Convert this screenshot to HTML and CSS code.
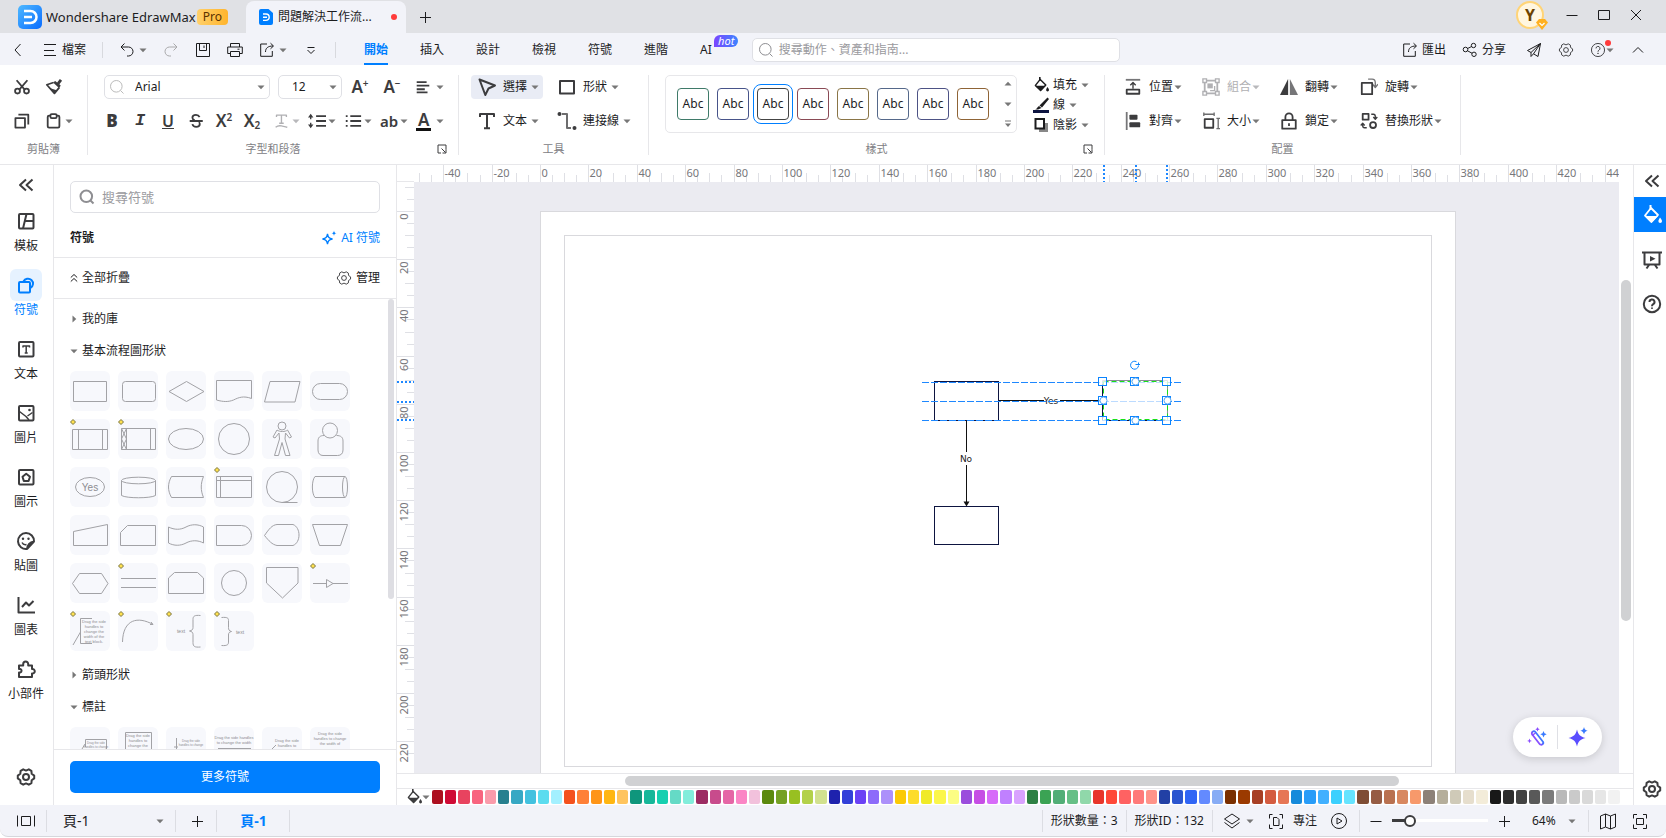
FILE: index.html
```html
<!DOCTYPE html>
<html lang="zh-Hant">
<head>
<meta charset="utf-8">
<title>Wondershare EdrawMax</title>
<link rel="stylesheet" href="styles.css">
</head>
<body>
<svg class="sprite" aria-hidden="true">
  <defs>
    <linearGradient id="g-logo" x1="0" y1="0" x2="1" y2="1"><stop offset="0" stop-color="#4fb9ff"/><stop offset="1" stop-color="#0a6cff"/></linearGradient>
    <linearGradient id="g-ai" x1="0" y1="0" x2="1" y2="0"><stop offset="0" stop-color="#8a4dff"/><stop offset="1" stop-color="#3a7bff"/></linearGradient>
  </defs>
  <symbol id="caret" viewBox="0 0 8 8"><path d="M.5 2.500h7L4 6.300z" fill="currentColor"/></symbol>
  <symbol id="i-back" viewBox="0 0 16 16"><path d="M10.5 2 5 8l5.500 6" class="s1"/></symbol>
  <symbol id="i-menu" viewBox="0 0 16 16"><path d="M2 2.500h12M2 8.500h10M2 13.500h12" class="s1"/></symbol>
  <symbol id="i-undo" viewBox="0 0 16 16"><path d="M5.500 1.500 2 5l3.500 3.500M2 5h7.500a4.500 4.500 0 0 1 0 9H8" class="s1"/></symbol>
  <symbol id="i-redo" viewBox="0 0 16 16"><path d="M10.500 1.500 14 5l-3.500 3.500M14 5H6.500a4.500 4.500 0 0 0 0 9H8" class="s1"/></symbol>
  <symbol id="i-save" viewBox="0 0 16 16"><path d="M1.500 1.500h13v13h-13zM4.500 1.500v7h7v-7M9 3.500v2.500" class="s1"/></symbol>
  <symbol id="i-print" viewBox="0 0 16 16"><path d="M3.500 5V1.500h9V5M3.500 11.500H.7V5h14.600v6.500h-2.800M3.500 9.500h9v5h-9zM10.500 7.200h2" class="s1"/></symbol>
  <symbol id="i-export" viewBox="0 0 16 16"><path d="M8 2H1.700v12.300h11.600V9M6.500 10c0-4 2.500-6 7.500-6M11.500 1.200 14.500 4l-3 2.800" class="s1"/></symbol>
  <symbol id="i-more" viewBox="0 0 16 16"><path d="M4.500 5.500h7" class="s1"/><path d="m4.500 8 3.500 3.500L11.500 8" class="s1"/></symbol>
  <symbol id="i-search" viewBox="0 0 16 16"><circle cx="7.300" cy="7.300" r="5.800" fill="none" stroke="currentColor"/><path d="m11.500 11.500 3 3" fill="none" stroke="currentColor"/></symbol>
  <symbol id="i-share" viewBox="0 0 16 16"><circle cx="3.500" cy="7.500" r="2.300" class="s1"/><circle cx="11.500" cy="3.500" r="2.200" class="s1"/><circle cx="12" cy="12.300" r="2.200" class="s1"/><path d="m5.600 6.500 4-2M5.400 8.700l4.700 2.600" class="s1"/></symbol>
  <symbol id="i-plane" viewBox="0 0 16 16"><path d="M14.500 1.500 1.500 8.500l3.500 2v4l2.500-2.700 4.500 2.700zM5 10.500l9.500-9-7 10.300" class="s1"/></symbol>
  <symbol id="i-gear" viewBox="0 0 20 20"><path d="M7.200 2.300 10 3.600l2.800-1.300 2.600 1.500.3 3 2.500 1.800v2.800l-2.500 1.800-.3 3-2.600 1.500L10 16.400l-2.800 1.300-2.600-1.500-.3-3-2.500-1.800V8.600l2.500-1.800.3-3z" fill="none" stroke="currentColor" stroke-linejoin="round"/><circle cx="10" cy="10" r="3" fill="none" stroke="currentColor"/></symbol>
  <symbol id="i-help" viewBox="0 0 20 20"><circle cx="10" cy="10" r="8.200" fill="none" stroke="currentColor"/><path d="M7.500 8a2.500 2.500 0 1 1 3.700 2.200c-.9.500-1.200.9-1.200 2" fill="none" stroke="currentColor"/><circle cx="10" cy="14.200" r=".9" fill="currentColor"/></symbol>
  <symbol id="i-up" viewBox="0 0 16 16"><path d="m3 10.500 5-5 5 5" class="s1"/></symbol>

  <symbol id="i-cut" viewBox="0 0 20 20"><path d="m4 2.500 9 10.500M16 2.500 7 13" class="s2"/><circle cx="5" cy="14.500" r="2.700" class="s2"/><circle cx="15" cy="14.500" r="2.700" class="s2"/></symbol>
  <symbol id="i-brush" viewBox="0 0 20 20"><path d="m13.500 5 3-4 2.500 2-3 4 1.500 1.500-2 2.500-6.500-6 2.300-1.700z" fill="currentColor"/><path d="M9.500 5 2 7.500 10.500 17l5.500-6.500" class="s2"/><path d="m5 11 5.500 6 2.500-3.500z" fill="currentColor"/></symbol>
  <symbol id="i-copy" viewBox="0 0 20 20"><path d="M2.700 6.700h10.600v10.600H2.700z" class="s2"/><path d="M6 3h11v11" class="s2"/></symbol>
  <symbol id="i-paste" viewBox="0 0 20 20"><rect x="3" y="4" width="13" height="13.300" rx="1.500" class="s2"/><rect x="6" y="2.300" width="7" height="4.500" rx="1.500" fill="#fff" stroke="currentColor" stroke-width="2"/></symbol>
  <symbol id="i-align" viewBox="0 0 20 20"><path d="M3 4.500h11M3 8.500h14M3 12.500h9M3 16h12" class="s2"/></symbol>
  <symbol id="i-strike" viewBox="0 0 20 20"><path d="M14 5.700C13.300 4.200 12 3.300 10 3.300c-2.500 0-4 1.200-4 3 0 1.500 1 2.200 2.500 2.700M6 13.500c.5 2 2 3 4.200 3 2.600 0 4-1.300 4-3.200 0-1-.4-1.600-1-2.100M3 10h14.500" class="s2"/></symbol>
  <symbol id="i-tfx" viewBox="0 0 20 20"><path d="M5 5.500V3.500h11v2M10.500 3.500v8.500M8 12.500h5M4 17c2.500-2 4.500-2 6.500-1.500S15 16 17 17" class="s15"/></symbol>
  <symbol id="i-lines" viewBox="0 0 20 20"><path d="M9 4.500h11M9 10h11M9 15.500h11" class="s2"/><path d="M3 4v4M3 12v4" class="s15"/><path d="M0 6 3 2l3 4zM0 14l3 4 3-4z" fill="currentColor"/></symbol>
  <symbol id="i-list" viewBox="0 0 20 20"><path d="M7 4.500h12M7 10h12M7 15.500h12" class="s2"/><path d="M2 4.500h2M2 10h2M2 15.500h2" class="s2"/></symbol>
  <symbol id="i-launch" viewBox="0 0 10 10"><path d="M9 5.500V1H1v8h3" class="s1"/><path d="m4.500 4.500 4 4M9 5.500V9H5.500" class="s1"/></symbol>
  <symbol id="i-select" viewBox="0 0 20 20"><path d="M2.500 2.500 18 8.500l-6.500 3L8.300 18z" class="s2"/></symbol>
  <symbol id="i-rect" viewBox="0 0 20 20"><path d="M3 4h14v12.500H3z" class="s2"/></symbol>
  <symbol id="i-text" viewBox="0 0 20 20"><path d="M3 6V3h14v3M10 3v14M7 17.200h6" class="s2"/></symbol>
  <symbol id="i-conn" viewBox="0 0 20 20"><circle cx="2.500" cy="3" r="2" fill="currentColor"/><circle cx="17.500" cy="17" r="2" fill="currentColor"/><path d="M5 3h5v14h4" class="s2" opacity=".75"/></symbol>
  <symbol id="i-bucket" viewBox="0 0 20 20"><path d="M9 3 16 10l-6.500 7L3 10.500z" fill="none" stroke="currentColor" stroke-width="1.800" stroke-linejoin="round"/><path d="M3 11h13l-6.500 6.500zM7.500 0h2v5h-2z" fill="currentColor"/><path d="M18 12.500c1.500 2 2 3 2 3.700a1.800 1.800 0 0 1-3.600 0c0-.8.600-1.800 1.600-3.700z" fill="currentColor"/></symbol>
  <symbol id="i-pen" viewBox="0 0 16 16"><path d="M14.500.5 16 2 9 10.500 6.500 8.500zM6 9l2.500 2L5 12.500H2C4 12 4 10 6 9z" fill="currentColor"/><path d="M0 13h16v3H0z" fill="#0d1440"/></symbol>
  <symbol id="i-shadow" viewBox="0 0 16 16"><path d="M6 6h9v9H6z" fill="#888"/><path d="M2.500 2h8.500v9.500H2.500z" fill="#fff" stroke="currentColor" stroke-width="2"/></symbol>
  <symbol id="i-pos" viewBox="0 0 20 20"><path d="M2 2h16" class="s2" opacity=".7"/><path d="M3 13h14v4.500H3z" class="s2"/><path d="M10 12V6M7 8l3-3 3 3" class="s15"/></symbol>
  <symbol id="i-alignobj" viewBox="0 0 20 20"><path d="M3 0v20" class="s2" opacity=".7"/><rect x="6" y="3" width="9" height="5.500" rx="1" fill="currentColor"/><rect x="6" y="11.500" width="12" height="5.500" rx="1" fill="currentColor"/></symbol>
  <symbol id="i-group" viewBox="0 0 20 20"><path d="M3 3h14v14H3z" class="s2"/><path d="M1 1h4v4H1zM15 1h4v4h-4zM1 15h4v4H1zM15 15h4v4h-4z" fill="#fff" stroke="currentColor" stroke-width="1.500"/><path d="M6 6h6v5.500H6z" fill="currentColor"/><path d="M14 9v5H9" class="s15"/></symbol>
  <symbol id="i-size" viewBox="0 0 20 20"><path d="M3 8h9.500v9.500H3z" class="s2"/><path d="M2 2.500h11.500M2 .500v4M13.500.500v4M18 7v11.500M16 7h4M16 18.500h4" class="s15" opacity=".75"/></symbol>
  <symbol id="i-flip" viewBox="0 0 20 20"><path d="M9 1v18H0z" fill="currentColor"/><path d="M11 1v18h9z" fill="currentColor" opacity=".7"/></symbol>
  <symbol id="i-lock" viewBox="0 0 20 20"><path d="M2.500 9h15v9.500h-15zM6 9V5.500a4 4 0 0 1 8 0V9" class="s2"/><path d="M10 12.500v3" class="s2"/></symbol>
  <symbol id="i-rotate" viewBox="0 0 20 20"><path d="M2 5.500h11.500V18H2z" class="s2"/><path d="M9 1.200h4.500c2.500 0 3.500 1.500 3.500 4V9M14 7l3 3.500L20 7" class="s15" opacity=".7"/></symbol>
  <symbol id="i-replace" viewBox="0 0 20 20"><path d="M3 2h6.500v6.500H3z" class="s2"/><circle cx="14.500" cy="14.500" r="3.300" class="s2"/><path d="M12.500 2.500h2.500c1.500 0 2 1 2 2.500v2M14.800 5.500 17 8l2.200-2.500M7.500 17.500H5c-1.500 0-2-1-2-2.500v-2M.8 15 3 12.500 5.200 15" class="s15"/></symbol>

  <symbol id="i-dbl" viewBox="0 0 20 20"><path d="m10 4.500-6 5.500 6 5.500M16.500 4.500l-6 5.500 6 5.500" class="s2"/></symbol>
  <symbol id="i-tpl" viewBox="0 0 20 20"><rect x="3" y="3" width="14.500" height="14.500" rx="1" class="s2"/><path d="M10.500 3 7 17.500M9.500 10h8" class="s2"/></symbol>
  <symbol id="i-sym" viewBox="0 0 20 20"><rect x="3" y="7" width="11" height="10.500" rx="1" class="s2"/><path d="M7.500 6.500a5 5 0 1 1 7 6.500" class="s2"/></symbol>
  <symbol id="i-txt" viewBox="0 0 20 20"><rect x="3" y="3" width="14.500" height="14.500" rx="1" class="s2"/><path d="M7 8.500V7h6.500v1.500M10.200 7v7M8.700 14h3" class="s15"/></symbol>
  <symbol id="i-pic" viewBox="0 0 20 20"><rect x="3" y="3" width="14.500" height="14.500" rx="1" class="s2"/><path d="m3.500 8.500 6.500 5 3 3.500M11.500 13l5-3.500" class="s15"/><circle cx="13.500" cy="7" r="1.300" fill="currentColor"/></symbol>
  <symbol id="i-icon" viewBox="0 0 20 20"><rect x="3" y="3" width="14.500" height="14.500" rx="1" class="s2"/><path d="m10.200 6.800 3.800 2.900-1.400 4.200H7.800L6.500 9.700z" class="s2"/></symbol>
  <symbol id="i-stick" viewBox="0 0 20 20"><path d="M18 10.500A8 8 0 1 0 11 18c.5-4 2.500-6.500 7-7.500zM18 10.500 11 18" class="s2"/><circle cx="7" cy="7.800" r="1.200" fill="currentColor"/><circle cx="12.500" cy="7.800" r="1.200" fill="currentColor"/><path d="M6 11.500c1 2 2.500 2.500 4.500 2" class="s15"/></symbol>
  <symbol id="i-chart" viewBox="0 0 20 20"><path d="M2.500 2v15.500H19M6 12l4-4.500 3 3 4.500-4.500" class="s2"/></symbol>
  <symbol id="i-puz" viewBox="0 0 20 20"><path d="M3 6.500h4.200V5a2.500 2.500 0 0 1 5 0v1.500H16V10a2.300 2.300 0 1 1 0 4.500V18H3v-4.500h1.200a1.800 1.800 0 0 0 0-3.500H3z" class="s2"/></symbol>
  <symbol id="i-spark" viewBox="0 0 16 16"><path d="M6.500 4c.7 3.500 1.500 4.300 5 5-3.500.7-4.300 1.500-5 5-.7-3.500-1.500-4.300-5-5 3.500-.7 4.300-1.500 5-5z" fill="none" stroke="currentColor" stroke-width="1.300"/><path d="M13 .5c.3 2 .8 2.300 2.500 2.700C13.800 3.500 13.300 4 13 6c-.3-2-.8-2.500-2.500-2.800C12.200 2.800 12.700 2.500 13 .5z" fill="currentColor"/></symbol>
  <symbol id="i-fold" viewBox="0 0 8 10"><path d="M.8 4.500 4 1.500l3.200 3M.8 8.500 4 5.500l3.200 3" class="s1"/></symbol>
  <symbol id="i-present" viewBox="0 0 20 20"><path d="M0 2.500h20M2.500 3v11.500h15V3M7 15l-2.500 3.500M13 15l2.500 3.500" class="s2"/><path d="m8 6 5.500 2.700L8 11.500z" fill="currentColor"/></symbol>

  <symbol id="i-pages" viewBox="0 0 20 20"><path d="M1.500 4.500v11M18.500 4.500v11M5.500 5.500h9v9h-9z" class="s1"/></symbol>
  <symbol id="i-plus" viewBox="0 0 16 16"><path d="M8.500 3v11M3 8.500h11" class="s1"/></symbol>
  <symbol id="i-minus" viewBox="0 0 16 16"><path d="M2.500 8.500h11" class="s1"/></symbol>
  <symbol id="i-layers" viewBox="0 0 20 20"><path d="m10 3 7.500 5-7.500 5-7.500-5zM2.500 11.500 10 17l7.500-5.500" class="s1"/></symbol>
  <symbol id="i-focus" viewBox="0 0 20 20"><path d="M6.500 3.500h-3v4M13.500 3.500h3v4M6.500 17.500h-3v-4M13.500 17.500h3v-4M7.500 6.500H11l2 2v6H7.500z" class="s1"/></symbol>
  <symbol id="i-play" viewBox="0 0 20 20"><circle cx="10" cy="10" r="7.500" class="s1"/><path d="m8 7 5 3-5 3z" class="s1"/></symbol>
  <symbol id="i-map" viewBox="0 0 20 20"><path d="m2.500 5 5-2 5 2 5-2v13l-5 2-5-2-5 2zM7.500 3v13M12.500 5v13" class="s1"/></symbol>
  <symbol id="i-fit" viewBox="0 0 20 20"><path d="M7 3.500H3.500v4M13 3.500h3.500v4M7 17.500H3.500v-4M13 17.500h3.500v-4M6.500 7.500h7v6h-7z" class="s1"/></symbol>
</svg>

<header class="titlebar">
  <div class="brand">
    <svg class="brand-logo" viewBox="0 0 24 24"><rect width="24" height="24" rx="5" fill="url(#g-logo)"/><path d="M6 6h6.500a6 6 0 0 1 0 12H6" fill="none" stroke="#fff" stroke-width="2.500"/><path d="M6 12h8" stroke="#fff" stroke-width="2.500"/></svg>
    <span class="brand-name">Wondershare EdrawMax</span>
    <span class="pro">Pro</span>
  </div>
  <div class="doc-tab">
    <svg class="doc-icon" viewBox="0 0 14 16"><path d="M2 0h7.500L14 4v10a2 2 0 0 1-2 2H2a2 2 0 0 1-2-2V2a2 2 0 0 1 2-2z" fill="#007fff"/><path d="M4 5h3a3.200 3.200 0 0 1 0 6.400H4M4 8.200h4" fill="none" stroke="#fff" stroke-width="1.400"/></svg>
    <span>問題解決工作流...</span>
    <i class="dot"></i>
  </div>
  <button class="plain new-tab" aria-label="新增"><svg class="i16"><use href="#i-plus"/></svg></button>
  <div class="window-controls">
    <button class="avatar" aria-label="帳戶">Y<svg class="gem" viewBox="0 0 12 12"><path d="M3 1h6l3 3.500L6 12 0 4.500z" fill="#ffb020"/><path d="m3.500 5 2.500 2.500L8.500 5" fill="none" stroke="#fff" stroke-width="1.200"/></svg></button>
    <button class="plain" aria-label="最小化"><svg class="i16"><use href="#i-minus"/></svg></button>
    <button class="plain" aria-label="最大化"><svg class="i16" viewBox="0 0 16 16"><path d="M2.500 3.500h11v9h-11z" class="s1"/></svg></button>
    <button class="plain" aria-label="關閉"><svg class="i16" viewBox="0 0 16 16"><path d="m3 3 10 10M13 3 3 13" class="s1"/></svg></button>
  </div>
</header>

<div class="menubar">
  <button class="plain" aria-label="返回"><svg class="i16"><use href="#i-back"/></svg></button>
  <button class="plain"><svg class="i16"><use href="#i-menu"/></svg>檔案</button>
  <i class="vsep"></i>
  <button class="plain" aria-label="復原"><svg class="i16"><use href="#i-undo"/></svg><svg class="caret"><use href="#caret"/></svg></button>
  <button class="plain dim" aria-label="重做"><svg class="i16"><use href="#i-redo"/></svg></button>
  <button class="plain" aria-label="儲存"><svg class="i16"><use href="#i-save"/></svg></button>
  <button class="plain" aria-label="列印"><svg class="i16"><use href="#i-print"/></svg></button>
  <button class="plain" aria-label="匯出檔案"><svg class="i16"><use href="#i-export"/></svg><svg class="caret"><use href="#caret"/></svg></button>
  <button class="plain" aria-label="更多"><svg class="i16"><use href="#i-more"/></svg></button>
  <i class="vsep"></i>
  <nav class="tabs">
    <a href="#" class="active">開始</a><a href="#">插入</a><a href="#">設計</a><a href="#">檢視</a><a href="#">符號</a><a href="#">進階</a><a href="#">AI<span class="hot">hot</span></a>
  </nav>
  <label class="search top-search"><svg class="i16"><use href="#i-search"/></svg><input type="text" placeholder="搜尋動作、資產和指南..." aria-label="搜尋動作"></label>
  <div class="menu-right">
    <button class="plain"><svg class="i16"><use href="#i-export"/></svg>匯出</button>
    <button class="plain share"><svg class="i16"><use href="#i-share"/></svg>分享</button>
    <button class="plain" aria-label="傳送"><svg class="i16"><use href="#i-plane"/></svg></button>
    <button class="plain" aria-label="設定"><svg class="i16"><use href="#i-gear"/></svg></button>
    <button class="plain help" aria-label="說明"><svg class="i16"><use href="#i-help"/></svg><svg class="caret"><use href="#caret"/></svg><i class="dot"></i></button>
    <button class="plain" aria-label="收合"><svg class="i16"><use href="#i-up"/></svg></button>
  </div>
</div>

<div class="ribbon">
  <section class="group g-clip">
    <div class="rows">
      <div class="row r12">
        <button class="plain" aria-label="剪下"><svg class="i18"><use href="#i-cut"/></svg></button>
        <button class="plain" aria-label="複製格式"><svg class="i18"><use href="#i-brush"/></svg></button>
      </div>
      <div class="row r12">
        <button class="plain" aria-label="複製"><svg class="i18"><use href="#i-copy"/></svg></button>
        <button class="plain" aria-label="貼上"><svg class="i18"><use href="#i-paste"/></svg><svg class="caret"><use href="#caret"/></svg></button>
      </div>
    </div>
    <footer class="solo"><span>剪貼簿</span></footer>
  </section>

  <section class="group g-font">
    <div class="rows">
      <div class="row">
        <label class="combo combo-font"><svg class="i16 faint"><use href="#i-search"/></svg><select aria-label="字型"><option>Arial</option></select><svg class="caret"><use href="#caret"/></svg></label>
        <label class="combo combo-size"><select aria-label="字型大小"><option>12</option></select><svg class="caret"><use href="#caret"/></svg></label>
        <div class="row r12">
          <button class="plain glyph" aria-label="放大字型">A<sup>+</sup></button>
          <button class="plain glyph" aria-label="縮小字型">A<sup>−</sup></button>
          <button class="plain sq" aria-label="對齊文字"><svg class="i18"><use href="#i-align"/></svg><svg class="caret"><use href="#caret"/></svg></button>
        </div>
      </div>
      <div class="row">
        <div class="row r12 narrow">
          <button class="plain glyph" aria-label="粗體"><b>B</b></button>
          <button class="plain glyph ital" aria-label="斜體">I</button>
          <button class="plain glyph under" aria-label="底線">U</button>
          <button class="plain" aria-label="刪除線"><svg class="i18"><use href="#i-strike"/></svg></button>
          <button class="plain glyph" aria-label="上標">X<sup>2</sup></button>
          <button class="plain glyph" aria-label="下標">X<sub>2</sub></button>
          <button class="plain withc dim" aria-label="文字效果"><svg class="i18"><use href="#i-tfx"/></svg><svg class="caret"><use href="#caret"/></svg></button>
        </div>
        <div class="row narrow">
          <button class="plain withc" aria-label="行距"><svg class="i18"><use href="#i-lines"/></svg><svg class="caret"><use href="#caret"/></svg></button>
          <button class="plain withc" aria-label="清單"><svg class="i18"><use href="#i-list"/></svg><svg class="caret"><use href="#caret"/></svg></button>
          <button class="plain withc glyph ab" aria-label="大小寫"><span>ab</span><svg class="caret"><use href="#caret"/></svg></button>
          <button class="plain withc glyph fontcolor" aria-label="字型色彩"><span>A</span><svg class="caret"><use href="#caret"/></svg></button>
        </div>
      </div>
    </div>
    <footer><span>字型和段落</span><button class="plain" aria-label="字型選項"><svg class="i10"><use href="#i-launch"/></svg></button></footer>
  </section>

  <section class="group g-tools">
    <div class="rows">
      <div class="row">
        <button class="tool on"><svg class="i20"><use href="#i-select"/></svg>選擇<svg class="caret"><use href="#caret"/></svg></button>
        <button class="tool"><svg class="i20"><use href="#i-rect"/></svg>形狀<svg class="caret"><use href="#caret"/></svg></button>
      </div>
      <div class="row">
        <button class="tool"><svg class="i20"><use href="#i-text"/></svg>文本<svg class="caret"><use href="#caret"/></svg></button>
        <button class="tool"><svg class="i20"><use href="#i-conn"/></svg>連接線<svg class="caret"><use href="#caret"/></svg></button>
      </div>
    </div>
    <footer class="solo"><span>工具</span></footer>
  </section>

  <section class="group g-style">
    <div class="style-body">
      <div class="gallery">
        <button class="abc a1">Abc</button><button class="abc a2">Abc</button><button class="abc a3 picked">Abc</button><button class="abc a4">Abc</button><button class="abc a5">Abc</button><button class="abc a6">Abc</button><button class="abc a7">Abc</button><button class="abc a8">Abc</button>
        <div class="gallery-nav">
          <button class="plain" aria-label="上一列"><svg class="caret flipv"><use href="#caret"/></svg></button>
          <button class="plain" aria-label="下一列"><svg class="caret"><use href="#caret"/></svg></button>
          <button class="plain" aria-label="展開"><svg class="caret" viewBox="0 0 8 8"><path d="M1 .5h6v1H1zM1 3.500h6L4 7z" fill="currentColor"/></svg></button>
        </div>
      </div>
      <div class="style-list">
        <button class="plain"><svg class="i16"><use href="#i-bucket"/></svg>填充<svg class="caret"><use href="#caret"/></svg></button>
        <button class="plain"><svg class="i16"><use href="#i-pen"/></svg>線<svg class="caret"><use href="#caret"/></svg></button>
        <button class="plain"><svg class="i16"><use href="#i-shadow"/></svg>陰影<svg class="caret"><use href="#caret"/></svg></button>
      </div>
    </div>
    <footer><span>樣式</span><button class="plain" aria-label="樣式選項"><svg class="i10"><use href="#i-launch"/></svg></button></footer>
  </section>

  <section class="group g-arr">
    <div class="arr-grid">
      <button class="tool"><svg class="i18"><use href="#i-pos"/></svg>位置<svg class="caret"><use href="#caret"/></svg></button>
      <button class="tool dim"><svg class="i18"><use href="#i-group"/></svg>組合<svg class="caret"><use href="#caret"/></svg></button>
      <button class="tool"><svg class="i18"><use href="#i-flip"/></svg>翻轉<svg class="caret"><use href="#caret"/></svg></button>
      <button class="tool"><svg class="i18"><use href="#i-rotate"/></svg>旋轉<svg class="caret"><use href="#caret"/></svg></button>
      <button class="tool"><svg class="i18"><use href="#i-alignobj"/></svg>對齊<svg class="caret"><use href="#caret"/></svg></button>
      <button class="tool"><svg class="i18"><use href="#i-size"/></svg>大小<svg class="caret"><use href="#caret"/></svg></button>
      <button class="tool"><svg class="i18"><use href="#i-lock"/></svg>鎖定<svg class="caret"><use href="#caret"/></svg></button>
      <button class="tool"><svg class="i18"><use href="#i-replace"/></svg>替換形狀<svg class="caret"><use href="#caret"/></svg></button>
    </div>
    <footer class="solo"><span>配置</span></footer>
  </section>
</div>

<main class="work">
  <nav class="rail">
    <button class="plain collapse" aria-label="收合面板"><svg class="i20"><use href="#i-dbl"/></svg></button>
    <button class="rail-item"><span><svg class="i20"><use href="#i-tpl"/></svg></span>模板</button>
    <button class="rail-item on"><span><svg class="i20"><use href="#i-sym"/></svg></span>符號</button>
    <button class="rail-item"><span><svg class="i20"><use href="#i-txt"/></svg></span>文本</button>
    <button class="rail-item"><span><svg class="i20"><use href="#i-pic"/></svg></span>圖片</button>
    <button class="rail-item"><span><svg class="i20"><use href="#i-icon"/></svg></span>圖示</button>
    <button class="rail-item"><span><svg class="i20"><use href="#i-stick"/></svg></span>貼圖</button>
    <button class="rail-item"><span><svg class="i20"><use href="#i-chart"/></svg></span>圖表</button>
    <button class="rail-item"><span><svg class="i20"><use href="#i-puz"/></svg></span>小部件</button>
    <button class="plain rail-gear" aria-label="設定"><svg class="i20 bold"><use href="#i-gear"/></svg></button>
  </nav>

  <aside class="panel">
    <div class="panel-head">
      <label class="search side-search"><svg class="i16 bold"><use href="#i-search"/></svg><input type="text" placeholder="搜尋符號" aria-label="搜尋符號"></label>
      <div class="between"><b>符號</b><button class="plain blue"><svg class="i16"><use href="#i-spark"/></svg>AI 符號</button></div>
    </div>
    <div class="panel-tools">
      <button class="plain"><svg class="fold"><use href="#i-fold"/></svg>全部折疊</button>
      <button class="plain"><svg class="i16"><use href="#i-gear"/></svg>管理</button>
    </div>
    <div class="lib">
      <button class="lib-title"><svg class="caret right"><use href="#caret"/></svg>我的庫</button>
      <button class="lib-title"><svg class="caret"><use href="#caret"/></svg>基本流程圖形狀</button>
      <div class="tiles" id="basic"></div>
      <button class="lib-title"><svg class="caret right"><use href="#caret"/></svg>箭頭形狀</button>
      <button class="lib-title"><svg class="caret"><use href="#caret"/></svg>標註</button>
      <div class="tiles" id="callouts"></div>
      <i class="lib-thumb"></i>
    </div>
    <div class="panel-foot"><button class="primary">更多符號</button></div>
  </aside>

  <section class="stage">
    <div class="corner"></div>
    <svg class="ruler-h" id="rulerH"></svg>
    <div class="vscroll"><i></i></div>
    <svg class="ruler-v" id="rulerV"></svg>
    <div class="canvas">
      <svg class="drawing">
        <rect x="126.500" y="29.500" width="915" height="640" fill="#fff" stroke="#d9d9dd"/>
        <rect x="150.500" y="53.500" width="867" height="531" fill="none" stroke="#d9d9dd"/>
        <g fill="none" stroke="#0d1440"><rect x="520.500" y="199.500" width="64" height="39"/><rect x="520.500" y="324.500" width="64" height="38"/></g>
        <path d="M585 218.500h45M646 218.500h42M552.500 239v31M552.500 283v39" stroke="#111" fill="none"/>
        <path d="M549.500 319.500h6l-3 5z" fill="#111"/>
        <text x="637" y="222" class="lbl">Yes</text>
        <text x="552" y="280" class="lbl">No</text>
        <path d="M688.500 239v-40.500h65V239" fill="#fff" stroke="#8c8c9a"/>
        <path d="M688.500 202v36.500h65" fill="none" stroke="#0d1440"/>
        <path d="M508 200.500h259M508 219.500h259M508 238.500h259" stroke="#1e88ff" stroke-dasharray="7 2" fill="none"/>
        <rect x="690" y="200" width="63" height="38" fill="#fff" opacity=".7"/>
        <rect x="689.500" y="199.500" width="64" height="38" fill="none" stroke="#18e018" stroke-dasharray="5 3"/>
        <g fill="#fff" fill-opacity=".75" stroke="#0a84ff" shape-rendering="crispEdges">
          <path d="M684.500 195.500h8v8h-8zM716.500 195.500h8v8h-8zM748.500 195.500h8v8h-8zM684.500 214.500h8v8h-8zM748.500 214.500h8v8h-8zM684.500 234.500h8v8h-8zM716.500 234.500h8v8h-8zM748.500 234.500h8v8h-8z"/>
        </g>
        <g fill="#fff" stroke="#5aa9f5"><circle cx="721.500" cy="199.500" r="3.500"/><circle cx="721.500" cy="238.500" r="3.500"/><circle cx="689.500" cy="218.500" r="3.500"/><circle cx="753.500" cy="218.500" r="3.500"/></g>
        <path d="M724.500 184a4 4 0 1 1-2-4.300M721.500 182.500h4.500M724.500 180.500v3" fill="none" stroke="#0a84ff"/>
      </svg>
      <div class="ai-float">
        <button class="plain" aria-label="AI 魔術棒"><svg class="i20" viewBox="0 0 20 20"><rect x="8.500" y="3" width="4" height="16" rx="2" transform="rotate(-38 10.500 11)" fill="none" stroke="url(#g-ai)" stroke-width="1.800"/><path d="m5 8.500 3.500-2.500" stroke="#8a4dff" stroke-width="1.500"/><path d="m10.500 0 .7 1.500 1.500.7-1.500.7-.7 1.500-.7-1.500-1.500-.7 1.500-.7zM2.500 11.500l.7 1.700 1.700.7-1.700.7-.7 1.700-.7-1.700-1.700-.7 1.700-.7z" fill="#8a4dff"/><path d="m16.500 4 1 2.200 2.200 1-2.200 1-1 2.200-1-2.200-2.200-1 2.200-1z" fill="#3a7bff"/></svg></button>
        <i></i>
        <button class="plain" aria-label="AI 助手"><svg class="i20" viewBox="0 0 20 20"><path d="M9 2.500c1.500 5.500 3 7 8.500 8.500-5.500 1.500-7 3-8.500 8.500C7.500 14 6 12.500.5 11 6 9.500 7.500 8 9 2.500z" fill="#5a4dff"/><path d="M16 0c.6 2.500 1.200 3.100 3.700 3.700-2.500.6-3.100 1.200-3.700 3.700-.6-2.500-1.200-3.100-3.700-3.700C14.800 3.100 15.400 2.500 16 0z" fill="#3a7bff"/></svg></button>
      </div>
    </div>
    <div class="hscroll"><i></i></div>
    <div class="palette">
      <button class="plain" aria-label="填充色彩"><svg class="i16"><use href="#i-bucket"/></svg><svg class="caret"><use href="#caret"/></svg></button>
      <div class="colors" id="colors"></div>
    </div>
  </section>

  <nav class="rail-right">
    <button class="plain" aria-label="展開面板"><svg class="i20"><use href="#i-dbl"/></svg></button>
    <button class="plain on" aria-label="樣式"><svg class="i20"><use href="#i-bucket"/></svg></button>
    <button class="plain" aria-label="簡報"><svg class="i20"><use href="#i-present"/></svg></button>
    <button class="plain" aria-label="說明"><svg class="i20 bold"><use href="#i-help"/></svg></button>
    <button class="plain end" aria-label="設定"><svg class="i20 bold"><use href="#i-gear"/></svg></button>
  </nav>
</main>

<footer class="status">
  <button class="plain pages" aria-label="頁面檢視"><svg class="i20"><use href="#i-pages"/></svg></button>
  <label class="page-select"><select aria-label="頁面"><option>頁-1</option></select><svg class="caret"><use href="#caret"/></svg></label>
  <button class="plain add" aria-label="新增頁面"><svg class="i16"><use href="#i-plus"/></svg></button>
  <button class="plain page-tab">頁-1</button>
  <div class="status-right">
    <span class="cell count">形狀數量：3</span>
    <span class="cell count">形狀ID：132</span>
    <div class="cell modes">
      <button class="plain" aria-label="圖層"><svg class="i20"><use href="#i-layers"/></svg><svg class="caret"><use href="#caret"/></svg></button>
      <button class="plain focus"><svg class="i20"><use href="#i-focus"/></svg>專注</button>
      <button class="plain" aria-label="播放"><svg class="i20"><use href="#i-play"/></svg></button>
    </div>
    <div class="cell zoom">
      <button class="plain" aria-label="縮小"><svg class="i16"><use href="#i-minus"/></svg></button>
      <input type="range" min="0" max="100" value="14" aria-label="縮放">
      <button class="plain" aria-label="放大"><svg class="i16"><use href="#i-plus"/></svg></button>
      <label class="zoom-select"><select aria-label="縮放比例"><option>64%</option></select><svg class="caret"><use href="#caret"/></svg></label>
    </div>
    <div class="cell views">
      <button class="plain" aria-label="導覽"><svg class="i20"><use href="#i-map"/></svg></button>
      <button class="plain" aria-label="全螢幕"><svg class="i20"><use href="#i-fit"/></svg></button>
    </div>
  </div>
</footer>
<script src="app.js"></script>
</body>
</html>
```
FILE: styles.css
```css
* { box-sizing: border-box; }
html, body { height: 100%; }
body {
  margin: 0;
  display: flex;
  flex-direction: column;
  overflow: hidden;
  background: #fff;
  color: #1c1c1e;
  font: 12px/16px "Noto Sans", "Noto Sans CJK TC", sans-serif;
}
button, input, select { font: inherit; color: inherit; }
button { cursor: pointer; white-space: nowrap; }
svg { display: block; flex: none; }
i { font-style: normal; }
.sprite { position: absolute; width: 0; height: 0; }
.s1, .s15, .s2 { fill: none; stroke: currentColor; stroke-width: 1; stroke-linejoin: round; }
.s15 { stroke-width: 1.500; }
.s2 { stroke-width: 2; }
.i10 { width: 10px; height: 10px; }
.i16 { width: 16px; height: 16px; }
.i18 { width: 18px; height: 18px; }
.i20 { width: 20px; height: 20px; }
.bold { stroke-width: 2; }
.caret { width: 8px; height: 8px; color: #777; }
.faint { color: #bbb; }
.dim { color: #a9a9ab; }
.dim .caret { color: #bbb; }
.blue { color: #007fff; }
.plain {
  display: flex;
  align-items: center;
  gap: 4px;
  padding: 0;
  border: 0;
  background: none;
}
.dot { width: 6px; height: 6px; border-radius: 50%; background: #ff3b3b; }

/* Title bar */
.titlebar {
  display: flex;
  flex: none;
  height: 33px;
  background: #e0e1e5;
}
.brand { display: flex; align-items: center; width: 246px; padding-left: 18px; }
.brand-logo { width: 24px; height: 24px; margin-right: 4px; }
.brand-name { font-size: 13px; }
.pro {
  margin-left: auto;
  margin-right: 18px;
  padding: 0 6px;
  border-radius: 4px;
  background: linear-gradient(90deg, #ffd06a, #ffb42c);
  color: #5a3200;
}
.doc-tab {
  display: flex;
  align-items: center;
  width: 160px;
  margin-top: 1px;
  padding: 0 9px 0 13px;
  border-radius: 8px 8px 0 0;
  background: #f2f3f9;
}
.doc-icon { width: 14px; height: 16px; margin-right: 5px; }
.doc-tab .dot { margin-left: auto; }
.new-tab { margin-left: 11px; }
.window-controls { display: flex; align-items: center; gap: 16px; margin-left: auto; padding: 0 22px 4px 0; }
.avatar {
  position: relative;
  width: 28px;
  height: 28px;
  margin-right: 4px;
  padding: 0;
  border: 2px solid #ffd477;
  border-radius: 50%;
  background: #fff6e0;
  color: #6b4200;
  font-size: 16px;
  font-weight: 700;
}
.gem { position: absolute; right: -6px; bottom: -3px; width: 12px; height: 12px; }

/* Menu bar */
.menubar {
  display: flex;
  flex: none;
  align-items: center;
  gap: 16px;
  height: 32px;
  padding: 2px 20px 0 10px;
  background: #f2f3f9;
}
.vsep { width: 1px; height: 16px; background: #d8d9de; }
.tabs { display: flex; gap: 32px; height: 30px; margin-left: 12px; }
.tabs a { position: relative; color: inherit; line-height: 30px; text-decoration: none; white-space: nowrap; }
.tabs .active { color: #007fff; font-weight: 700; box-shadow: inset 0 -2px #007fff; }
.hot {
  position: absolute;
  left: 14px;
  top: 0;
  padding: 0 4px;
  border-radius: 6px 6px 6px 0;
  background: linear-gradient(90deg, #7b46ff, #3d84ff);
  color: #fff;
  font-size: 11px;
  font-style: italic;
  line-height: 12px;
}
.search, .combo {
  display: flex;
  align-items: center;
  border: 1px solid #dfe0e5;
  border-radius: 5px;
  background: #fff;
}
.search input { flex: 1; min-width: 0; padding: 0; border: 0; outline: 0; background: none; }
.search input::placeholder { color: #9a9a9e; opacity: 1; }
.search svg { color: #8e8e92; }
.top-search { flex: 0 1 368px; gap: 5px; height: 24px; margin-left: 24px; padding: 0 5px; }
.menu-right { display: flex; align-items: center; gap: 16px; margin-left: auto; }
.share { margin-right: 4px; }
.help { position: relative; gap: 0; }
.help .dot { position: absolute; left: 15px; top: -2px; }

/* Ribbon */
.ribbon {
  display: flex;
  flex: none;
  height: 100px;
  padding: 10px 0 9px;
  border-bottom: 1px solid #e7e7ea;
}
.group { display: flex; flex-direction: column; border-right: 1px solid #e7e7ea; }
.group footer {
  display: grid;
  grid-template-columns: 32px 1fr 32px;
  align-items: center;
  margin-top: auto;
  color: #808084;
  font-size: 11px;
  line-height: 12px;
}
.group .solo { display: block; text-align: center; }
.group footer span { grid-column: 2; text-align: center; }
.group footer button { justify-self: center; color: #444; }
.ribbon .plain, .tool svg:first-child { color: #3c3c3e; }
.ribbon .style-list .plain { color: #1c1c1e; }
.ribbon .dim, .ribbon .dim svg:first-child { color: #b0b0b3; }
.ribbon .caret { color: #777; }
.ribbon .dim .caret { color: #b8b8bb; }
.rows { display: flex; flex-direction: column; gap: 10px; }
.row { display: flex; align-items: center; gap: 8px; height: 24px; }
.r12 { gap: 12px; }
.g-clip { width: 88px; }
.g-clip .rows { padding-left: 12px; }
.g-clip .plain { gap: 2px; padding-left: 1px; min-width: 20px; }
.g-clip .r12 { gap: 12px; }
.g-font { width: 371px; }
.g-font .rows { padding-left: 16px; }
.combo { height: 24px; padding: 0 4px; }
.combo select, .page-select select, .zoom-select select {
  flex: 1;
  min-width: 0;
  padding: 0;
  border: 0;
  outline: 0;
  background: none;
  appearance: none;
}
.combo-font { width: 166px; gap: 10px; }
.combo-size { width: 64px; padding-left: 13px; }
.glyph { font-size: 17px; font-weight: 600; line-height: 20px; justify-content: center; gap: 0; min-width: 20px; }
.glyph sup, .glyph sub { align-self: flex-start; font-size: 10px; line-height: 12px; }
.glyph sub { align-self: flex-end; }
.ital { font-family: "Liberation Mono", monospace; font-style: italic; }
.under { text-decoration: underline; font-size: 16px; }
.narrow .plain { justify-content: center; width: 16px; min-width: 16px; }
.narrow .withc { justify-content: space-between; width: 28px; gap: 0; }
.narrow .ab { gap: 2px; font-size: 15px; }
.fontcolor span { border-bottom: 3px solid #111; line-height: 16px; padding: 0 2px; }
.g-tools { width: 190px; }
.g-tools .rows { padding-left: 12px; }
.tool {
  display: flex;
  align-items: center;
  gap: 6px;
  height: 24px;
  padding: 0 4px 0 6px;
  border: 0;
  border-radius: 4px;
  background: none;
}
.tool .caret { margin-left: -2px; }
.on.tool { background: #e9ecf5; }
.g-style { width: 456px; }
.style-body { display: flex; gap: 16px; padding-left: 16px; }
.gallery {
  display: flex;
  align-items: center;
  gap: 8px;
  width: 352px;
  height: 58px;
  padding: 0 4px 0 11px;
  border: 1px solid #e7e7ea;
  border-radius: 5px;
}
.abc { width: 32px; height: 32px; padding: 0; border: 1px solid; border-radius: 4px; background: #fff; }
.a1 { border-color: #3f7a69; }
.a2 { border-color: #47548a; }
.a3 { border-color: #444; }
.a4 { border-color: #8a4a55; }
.a5 { border-color: #8a7546; }
.a6 { border-color: #55688a; }
.a7 { border-color: #4d5285; }
.a8 { border-color: #8f6436; }
.picked { outline: 1px solid #007fff; outline-offset: 3px; }
.gallery-nav { display: flex; flex-direction: column; gap: 12px; margin-left: auto; }
.flipv { transform: rotate(180deg); }
.style-list { display: flex; flex-direction: column; }
.style-list .plain { height: 20px; }
.g-arr { width: 356px; }
.arr-grid { display: grid; grid-template-columns: 78px 78px 80px auto; row-gap: 10px; padding-left: 12px; }
.arr-grid .tool { padding-left: 7px; gap: 7px; }
.arr-grid .caret { margin-left: -6px; }

/* Work area */
.work { display: flex; flex: 1; min-height: 0; }
.rail {
  display: flex;
  flex: none;
  flex-direction: column;
  align-items: center;
  width: 54px;
  padding: 10px 1px 18px 0;
  border-right: 1px solid #e7e7ea;
}
.collapse { margin-bottom: 10px; }
.rail svg, .rail-right svg { color: #3c3c3e; }
.rail-item {
  display: flex;
  flex-direction: column;
  align-items: center;
  height: 64px;
  padding: 0;
  border: 0;
  background: none;
  line-height: 18px;
}
.rail-item span { display: grid; place-items: center; width: 32px; height: 32px; border-radius: 6px; }
.rail .on, .rail .on svg { color: #007fff; }
.rail .on span { background: #e6f2ff; }
.rail-gear { margin-top: auto; }

.panel { display: flex; flex: none; flex-direction: column; width: 343px; border-right: 1px solid #e7e7ea; }
.panel-head { padding: 16px 16px 0; border-bottom: 1px solid #e7e7ea; }
.side-search { gap: 7px; height: 32px; padding: 0 8px; font-size: 13px; }
.between, .panel-tools { display: flex; align-items: center; justify-content: space-between; }
.between { height: 44px; padding-top: 6px; }
.panel-tools { height: 41px; padding: 0 16px; border-bottom: 1px solid #e7e7ea; }
.fold { width: 8px; height: 10px; }
.lib {
  position: relative;
  flex: 1;
  min-height: 0;
  padding: 4px 0 0 16px;
  overflow-y: auto;
  scrollbar-width: none;
}
.lib-title { display: flex; align-items: center; gap: 4px; width: 100%; height: 32px; padding: 0; border: 0; background: none; }
.right { transform: rotate(-90deg); }
.tiles { display: grid; grid-template-columns: repeat(6, 40px); gap: 8px; padding: 4px 0 8px; }
.tile { width: 40px; height: 40px; padding: 0; border: 0; border-radius: 6px; background: #f7f8fc; }
.tile svg { width: 40px; height: 40px; overflow: visible; fill: none; stroke: #a2a2a6; }
.tile text { fill: #8c8c90; stroke: none; font-family: "Liberation Sans", sans-serif; text-anchor: middle; }
.tile .handle { fill: #ffe14d; stroke: #7a7440; }
.lib-thumb { position: absolute; right: 2px; top: 0; width: 6px; height: 300px; border-radius: 3px; background: #dedee3; }
.panel-foot { padding: 11px 16px 12px; border-top: 1px solid #e7e7ea; }
.primary { width: 100%; height: 32px; border: 0; border-radius: 5px; background: #007fff; color: #fff; }

.stage {
  display: grid;
  flex: 1;
  min-width: 0;
  grid-template: 17px 1fr 15px 17px / 17px 1fr 14px;
}
.corner { border-bottom: 1px solid #e7e7ea; }
.ruler-h, .ruler-v { width: 100%; height: 100%; overflow: hidden; }
.ruler-h text, .ruler-v text { fill: #77777b; font-size: 11px; }
.tick { fill: none; stroke: #dfe0e5; }
.mark { fill: none; stroke: #1e88ff; stroke-width: 2; stroke-dasharray: 2 2; }
.canvas { position: relative; min-height: 0; overflow: hidden; background: #ebebf1; }
.drawing { position: absolute; width: 100%; height: 100%; }
.lbl { font-family: "DejaVu Sans", sans-serif; font-size: 9px; text-anchor: middle; fill: #222; }
.vscroll { grid-row: 1 / 3; grid-column: 3; padding: 115px 2px 152px; }
.vscroll i { display: block; height: 100%; border-radius: 5px; background: #d0d1d3; }
.hscroll { grid-column: 1 / -1; padding: 2px 234px 2px 228px; border-top: 1px solid #e7e7ea; }
.hscroll i { display: block; height: 10px; border-radius: 5px; background: #d0d1d3; }
.palette {
  display: flex;
  grid-column: 1 / -1;
  align-items: center;
  padding-left: 9px;
  border-top: 1px solid #e7e7ea;
}
.palette .plain { gap: 0; width: 26px; color: #3c3c3e; }
.colors { display: flex; flex: 1; gap: 2px; }
.colors button { flex: 1; height: 14px; padding: 0; border: 0; border-radius: 2px; }
.ai-float {
  position: absolute;
  right: 17px;
  bottom: 16px;
  display: flex;
  align-items: center;
  justify-content: center;
  gap: 10px;
  width: 89px;
  height: 40px;
  border-radius: 20px;
  background: #fff;
  box-shadow: 0 2px 8px rgb(0 0 0 / 15%);
}
.ai-float i { width: 1px; height: 24px; background: #dfe0e5; }
.rail-right { display: flex; flex: none; flex-direction: column; width: 33px; border-left: 1px solid #e7e7ea; }
.rail-right .plain { justify-content: center; height: 32px; padding-left: 4px; margin-bottom: 12px; }
.rail-right .plain:first-child { margin: 0; }
.rail-right .on { height: 35px; background: #007fff; }
.rail-right .on svg { color: #fff; }
.rail-right .end { margin: auto 0 0; }

/* Status bar */
.status {
  display: flex;
  flex: none;
  height: 32px;
  margin-bottom: 1px;
  border-bottom: 1px solid #d6d7dc;
  border-radius: 0 0 8px 8px;
  background: #f2f3f9;
}
.status > .plain, .page-select, .cell { position: relative; display: flex; align-items: center; }
.pages::after, .page-select::after, .add::after, .page-tab::after, .cell::before {
  content: "";
  position: absolute;
  right: 0;
  top: 5px;
  width: 1px;
  height: 22px;
  background: #dcdde3;
}
.cell::before { right: auto; left: 0; }
.pages { width: 47px; padding-left: 16px; }
.page-select { width: 129px; padding: 0 12px 0 16px; font-size: 14px; }
.add { justify-content: center; width: 41px; }
.page-tab { justify-content: center; width: 73px; color: #007fff; font-size: 14px; font-weight: 700; }
.status-right { display: flex; margin-left: auto; }
.cell { padding: 0 8px 0 9px; white-space: nowrap; }
.count { font-family: "Noto Sans", "Noto Sans CJK SC", sans-serif; }
.modes { gap: 12px; padding: 0 10px; }
.modes .plain { gap: 4px; }
.modes .focus { gap: 7px; }
.zoom { gap: 8px; padding-right: 12px; }
.zoom-select { display: flex; align-items: center; gap: 12px; margin-left: 12px; }
.views { gap: 12px; padding: 0 16px 0 10px; }
input[type="range"] {
  width: 96px;
  height: 12px;
  margin: 0;
  appearance: none;
  background: linear-gradient(90deg, #3c3c3e 16px, #fff 16px) center / 100% 3px no-repeat;
}
input[type="range"]::-webkit-slider-thumb {
  appearance: none;
  width: 12px;
  height: 12px;
  border: 2px solid #3c3c3e;
  border-radius: 50%;
  background: #fff;
}
```
FILE: app.js
```js
// Shape thumbnails, each on a 40 x 40 grid; h marks shapes with an adjust handle.
const tiny = (x, y, lines, size = 4) =>
  lines.map((t, i) => `<text x="${x}" y="${y + i * (size + 1)}" font-size="${size}">${t}</text>`).join('');

const basic = [
  { d: '<path d="M3.500 10.500h33v20h-33z"/>' },
  { d: '<rect x="4.500" y="10.500" width="33" height="20" rx="3"/>' },
  { d: '<path d="m3 20.500 17.500-10 17.500 10-17.500 10z"/>' },
  { d: '<path d="M2.500 9.500h35v18c-8-3-13-1-18 1.500-5 2-10 2-17 0z"/>' },
  { d: '<path d="M8 10.500h30l-5 20.500H2.500z"/>' },
  { d: '<rect x="2.500" y="12.500" width="35" height="16" rx="8"/>' },
  { h: 1, d: '<path d="M2.500 10.500h35v20h-35zM8.500 10.500v20M32.500 10.500v20"/>' },
  { h: 1, d: '<path d="M3.500 9.500h34v21h-34zM8.500 9.500v21M32.500 9.500v21M3.500 9.500l5 10.500-5 10.500M8.500 9.500 3.500 20l5 10.500"/>' },
  { d: '<ellipse cx="20" cy="20" rx="17.500" ry="10.500"/>' },
  { d: '<circle cx="20" cy="20" r="15.500"/>' },
  { d: '<circle cx="20" cy="7" r="4"/><path d="M15 11l-4 7 2 1 4-5 .5 6-5 16.500h4l3.500-13 3.500 13h4.500L23 20l.5-6 4 5 2-1-4-7c-2 2-8 2-10.500 0z"/>' },
  { d: '<circle cx="20" cy="11.500" r="7.500"/><path d="M14 16.500c-4 0-6 2-6 5.500v9c0 3.500 2 5.500 5 5.500h14.500c3.500 0 5.500-2 5.500-5.500v-9c0-3.500-2-5.500-6.500-5.500"/>' },
  { d: '<ellipse cx="20" cy="20" rx="14.500" ry="9.500"/><text x="20" y="24" font-size="10">Yes</text>' },
  { d: '<ellipse cx="20.500" cy="13.500" rx="17" ry="3.300"/><path d="M3.500 13.500v15c5 3 29 3 34 0v-15"/>' },
  { d: '<path d="M5.500 9.500h32c-3 7-3 14 0 21h-32c-4-7-4-14 0-21z"/>' },
  { h: 1, d: '<path d="M2.500 9.500h35v21h-35zM6.500 9.500v21M2.500 13.500h35"/>' },
  { d: '<circle cx="20" cy="20" r="15.500"/><path d="M20 35.500h15.500"/>' },
  { d: '<path d="M35 9.500H5c-3.500 4-3.500 17 0 21h30"/><ellipse cx="35" cy="20" rx="2.500" ry="10.500"/>' },
  { d: '<path d="m3.500 16.500 34-7v21h-34z"/>' },
  { d: '<path d="m2.500 17.500 7-7h28v20h-35z"/>' },
  { d: '<path d="M2.500 12c6 3 12 3 17.500 0s12-3 17.500 0v16c-5.500-3-12-3-17.500 0s-12 3-17.500 0z"/>' },
  { d: '<path d="M2.500 10.500h25a10 10 0 0 1 0 20h-25z"/>' },
  { d: '<path d="M2.500 20.500C7 14 10 10 15 9.500h16c8 3 8 18 0 21H15C10 29.500 7 26 2.500 20.500z"/>' },
  { d: '<path d="M2.500 9.500h35l-7 21H9.500z"/>' },
  { d: '<path d="m2.500 20.500 7-10h22l6.500 10-6.500 10h-22z"/>' },
  { h: 1, d: '<path d="M3 15.500h35M3 24.500h35"/>' },
  { d: '<path d="m2.500 15 6-5.500h23l6 5.500v15.500h-35z"/>' },
  { d: '<circle cx="20" cy="20" r="12.500"/>' },
  { d: '<path d="M4.500 4.500h31.500V20L20.500 35l-16-15z"/>' },
  { h: 1, d: '<path d="M3 20.500h13.500M23 20.500h15M16.500 16.500v8l6.500-4z"/>' },
  { h: 1, d: '<path d="M22 7.500H10.500v25H22M3 34l7.500-13"/>' + tiny(24, 12, ['Drag the side', 'handles to', 'change the', 'width of the', 'text block.']) },
  { h: 1, d: '<path d="M4.500 31C5 8 20 5 35 13.500l-2-2.500M35 13.500h-3"/>' },
  { h: 1, d: '<path d="M34.500 4.500c-6-.5-7.500.5-7.500 4v8c0 2-1 3-3.500 3.500 2.500.5 3.500 1.500 3.500 3.500v8c0 4 1.500 5 7.500 4.500"/>' + tiny(15, 22, ['text'], 5) },
  { h: 1, d: '<path d="M7.500 6.500c6-.5 7 .5 7 3v7c0 2 .5 3.500 3 4-2.500.5-3 1.500-3 3.500v7c0 2.500-1 4-7 3.500"/>' + tiny(26, 23, ['text'], 5) }
];

const callouts = [
  { d: '<path d="M15.500 20V12.500h21V30M12 22l3-5"/>' + tiny(26, 17, ['Drag the side', 'handles to change'], 3) },
  { d: '<path d="M7.500 30V5.500h26V30"/>' + tiny(20, 10, ['Drag the side', 'handles to', 'change the']) },
  { d: '<path d="M10.500 11v15M8 20h4"/>' + tiny(25, 15, ['Drag the side', 'handles to change'], 3) },
  { d: '<path d="M4 21.500h33"/>' + tiny(20, 12, ['Drag the side handles', 'to change the width']) },
  { d: '<path d="m10 22 4-4"/>' + tiny(25, 15, ['Drag the side', 'handles to']) },
  { d: tiny(20, 8, ['Drag the side', 'handles to change', 'the width of']) }
];

function fillTiles(id, items) {
  document.getElementById(id).innerHTML = items.map(({ d, h }) =>
    `<button class="tile" aria-label="形狀"><svg viewBox="0 0 40 40">${d}${h ? '<path class="handle" d="m3 .5 2.500 2.500L3 5.500.5 3z"/>' : ''}</svg></button>`
  ).join('');
}
fillTiles('basic', basic);
fillTiles('callouts', callouts);

// Rulers: one labelled tick every 20 mm, with three short ticks between.
function ruler(id, vertical, origin, step, from, to, marks) {
  let path = '', labels = '';
  for (let v = from; v <= to; v += 5) {
    const p = Math.round(origin + (v / 20) * step) + 0.5;
    const start = v % 20 === 0 ? 0 : v % 10 === 0 ? 8 : 10;
    path += vertical ? `M${start} ${p}H17` : `M${p} ${start}V17`;
    if (v % 20 === 0) {
      labels += vertical
        ? `<text transform="translate(11 ${p + 2}) rotate(-90)" text-anchor="end">${v}</text>`
        : `<text x="${p + 1}" y="12">${v}</text>`;
    }
  }
  const dots = marks.map(m => vertical ? `M0 ${m}H17` : `M${m} 0V17`).join('');
  document.getElementById(id).innerHTML =
    `<path class="tick" d="${path}"/>${labels}<path class="mark" d="${dots}"/>`;
}
ruler('rulerH', false, 126, 48.39, -50, 440, [690, 722, 753]);
ruler('rulerV', true, 29, 48.2, -10, 225, [200, 220, 238]);

const colors = `ad0f1f cf0a35 e8435f f8647f fa9bab 27808f 37a8c4 43c1df 5cdcef a3f0ff f4511e ff8038 ff9518 ffb612 ffc45e
0f967c 17b79a 17cfb0 65dac6 82eddb 9c2c63 c84b8c e566a6 fb85c5 f2c1dc 5c8a0e 75a124 98c021 b3d14a d2e18f
1e22ad 3340d9 6b41f5 8d6bfa ac90fa fbca05 fddc2b f0ea28 fbf64b fcfd84 9b4ddd c64ee5 d76bf9 c080ff d9a2ff
2e8044 3ba354 52ae77 66bf86 90d8aa e8352a ff4838 ff6262 ff7a7a ff938a 2240a5 2b55cf 3065f5 638aff 87acf5
7a2f00 9b3a00 a84025 d45c40 e67655 158adb 289cf8 42b0ff 3cd0fe 66e4ff 7f4d35 965c44 b97150 d88860 f7996b
8d8178 b5ae9b cfcab8 e6decd f3ecd9 181818 2d2d2d 434343 595959 7b7b7b b9b9b9 cacaca d9d9d9 e6e6e6 f2f2f2 ffffff`;
document.getElementById('colors').innerHTML =
  colors.split(/\s+/).map(c => `<button aria-label="#${c}" style="background:#${c}"></button>`).join('');
```
